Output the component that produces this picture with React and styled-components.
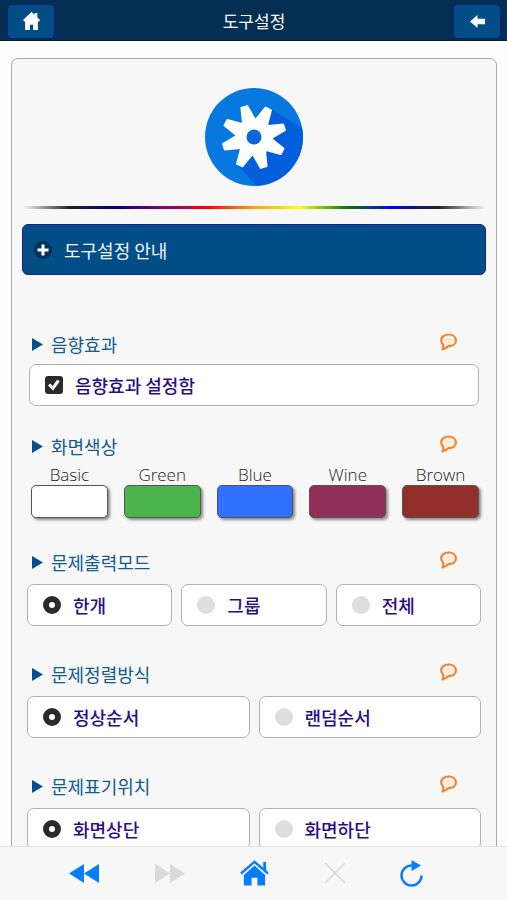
import styled, { createGlobalStyle } from 'styled-components';
import { useState } from 'react';

const GlobalStyle = createGlobalStyle`
* {
box-sizing: border-box;
}
body {
margin: 0;
background-color: #fdfdfd;
font-family: "Noto Sans CJK KR", "Noto Sans", sans-serif;
}
`;
const Page = styled.div`
display: flex;
flex-direction: column;
height: 100vh;
`;
const Header = styled.header`
display: flex;
flex-direction: row;
align-items: center;
justify-content: space-between;
flex: none;
height: 41px;
padding: 2px 6px 0 7px;
background-color: #042f52;
border-bottom: 1px solid #021a30;
`;
const HeaderTitle = styled.h1`
margin: 0;
color: #f4f7fa;
font-size: 17px;
font-weight: 400;
line-height: 24px;
`;
const HeaderButton = styled.button`
display: flex;
align-items: center;
justify-content: center;
width: 48px;
height: 35px;
padding: 0;
background-color: #044e87;
border: 1px solid #0a1c8c;
border-radius: 5px;
cursor: pointer;
`;
const Content = styled.main`
flex: 1;
min-height: 0;
padding: 17px 10px 17px 11px;
overflow-y: auto;
scrollbar-width: none;
`;
const Panel = styled.div`
display: flex;
flex-direction: column;
padding: 29px 10px 30px;
background-color: #f7f7f7;
border: 1px solid #a9a9a9;
border-radius: 7px;
`;
const GearIcon = styled.svg`
align-self: center;
width: 98px;
height: 98px;
`;
const Rainbow = styled.div`
height: 3px;
margin: 20px 1px 15px;
background: linear-gradient(to right, transparent, #222 10%, #00008b 20%, purple 30%, red 40%, orange 50%, yellow 60%, green 70%, blue 80%, #222 90%, transparent);
`;
const Guide = styled.button`
display: flex;
align-items: center;
gap: 12px;
height: 51px;
margin-bottom: 57px;
padding: 0 11px;
color: #eef6fc;
background-color: #044e87;
border: 1px solid #1c1c8c;
border-radius: 6px;
font-family: inherit;
font-size: 18px;
line-height: 24px;
cursor: pointer;
`;
const Section = styled.section`
margin-bottom: ${(props) => props.$space}px;
`;
const SectionHead = styled.div`
display: flex;
align-items: center;
height: 24px;
padding: 0 29px 0 10px;
margin-bottom: ${(props) => props.$space}px;
`;
const SectionTitle = styled.h2`
flex: 1;
margin: 0 0 0 8px;
color: #125a92;
font-size: 18px;
font-weight: 400;
line-height: 24px;
`;
const HelpButton = styled.button`
display: flex;
height: 22px;
padding: 0;
background: none;
border: none;
cursor: pointer;
`;
const OptionRow = styled.div`
display: flex;
gap: 9px;
margin: 0 ${(props) => props.$inset}px;
`;
const Option = styled.label`
display: flex;
flex: 1;
align-items: center;
gap: 12px;
height: 42px;
padding: 0 15px;
color: #2c0c8a;
background-color: white;
border: 1px solid #b0b0b0;
border-radius: 7px;
font-size: 18px;
font-weight: 500;
line-height: 24px;
cursor: pointer;
`;
const Radio = styled.input`
appearance: none;
flex: none;
width: 18px;
height: 18px;
margin: 0;
background-color: #dedede;
border-radius: 50%;
&:checked {
background-color: white;
border: 6px solid #2b2b2b;
}
`;
const Checkbox = styled.input`
appearance: none;
display: grid;
place-items: center;
flex: none;
width: 18px;
height: 18px;
margin: 0;
background-color: #dedede;
border-radius: 3px;
&:checked {
background-color: #2b2b2b;
}
&:checked::before {
content: "";
width: 12px;
height: 12px;
background-color: white;
clip-path: polygon(0 55%, 18% 38%, 38% 58%, 78% 4%, 98% 20%, 42% 96%);
}
`;
const SwatchRow = styled.div`
display: flex;
gap: 16px;
margin: 0 7px 0 9px;
`;
const SwatchLabel = styled.label`
display: flex;
flex: 1;
flex-direction: column;
color: #222;
font-family: "Open Sans", "Noto Sans", sans-serif;
font-size: 17px;
font-weight: 300;
line-height: 20px;
text-align: center;
`;
const Swatch = styled.button`
height: 33px;
padding: 0;
background-color: ${(props) => props.$color};
border: 1px solid #555;
border-radius: 5px;
box-shadow: 2px 2px 3px #888;
cursor: pointer;
`;
const BottomBar = styled.nav`
display: flex;
align-items: center;
justify-content: space-between;
flex: none;
height: 54px;
padding: 0 84px 1px 69px;
background-color: #f7f7f7;
border-top: 1px solid #e2e2e2;
`;
const BarButton = styled.button`
display: flex;
padding: 0;
color: #067dfd;
background: none;
border: none;
cursor: pointer;
&:disabled {
color: #d9d9da;
}
`;

const colors = [
  { name: "Basic", value: "#ffffff" },
  { name: "Green", value: "#4ab34b" },
  { name: "Blue", value: "#2f70fd" },
  { name: "Wine", value: "#922f58" },
  { name: "Brown", value: "#932f2a" },
];

const radioGroups = [
  { name: "output", title: "문제출력모드", options: ["한개", "그룹", "전체"] },
  { name: "order", title: "문제정렬방식", options: ["정상순서", "랜덤순서"] },
  { name: "position", title: "문제표기위치", options: ["화면상단", "화면하단"] },
];

function Gear() {
  return (
    <GearIcon viewBox="0 0 98 98" aria-hidden="true">
      <defs>
        <clipPath id="disc"><circle cx="49" cy="49" r="49" /></clipPath>
      </defs>
      <circle cx="49" cy="49" r="49" fill="#0678de" />
      <path d="M65 20L98 41V98H52L34 79Z" fill="#035edb" clipPath="url(#disc)" />
      <g fill="white" stroke="white" strokeWidth="2" strokeLinejoin="round" transform="rotate(-18 49 49)">
        <circle cx="49" cy="49" r="18" />
        {[0, 45, 90, 135, 180, 225, 270, 315].map((angle) => (
          <path key={angle} d="M42.500 34L46 17.500H52L55.500 34Z" transform={`rotate(${angle} 49 49)`} />
        ))}
      </g>
      <circle cx="49" cy="49" r="7.500" fill="#0569dc" />
    </GearIcon>
  );
}

function SectionHeader({ title, space }) {
  return (
    <SectionHead $space={space}>
      <svg width="11" height="13" viewBox="0 0 11 13" aria-hidden="true">
        <path d="M0 0L11 6.500L0 13Z" fill="#04508a" />
      </svg>
      <SectionTitle>{title}</SectionTitle>
      <HelpButton aria-label={title}>
        <svg width="17" height="18" viewBox="0 0 17 17" fill="#fff3e6" stroke="#f5842b" strokeWidth="2.200" strokeLinejoin="round">
          <path d="M3.200 11.200C1.800 10 1.200 8.600 1.200 7C1.200 3.600 4.400 1 8.700 1S15.900 3.600 15.900 7S12.800 12.700 8.500 12.700C7 14 5 15.400 2.400 15.900C3.300 14.600 3.600 12.800 3.200 11.200Z" />
          <path d="M5.500 6H11.500M5.500 8.500H10.500" stroke="#fbd9ba" strokeWidth="1" />
        </svg>
      </HelpButton>
    </SectionHead>
  );
}

function App() {
  const [sound, updateSound] = useState(true);
  const [selected, updateSelected] = useState({ output: "한개", order: "정상순서", position: "화면상단" });

  return (
    <Page>
      <GlobalStyle />
      <Header>
        <HeaderButton aria-label="홈">
          <svg width="17" height="18" viewBox="0 0 16 17" fill="white">
            <path d="M8 0L11 2.600V1H13.500V5L16 7.500L15 9H14V17H9.500V12H6.500V17H2V9H1L0 7.500Z" />
          </svg>
        </HeaderButton>
        <HeaderTitle>도구설정</HeaderTitle>
        <HeaderButton aria-label="뒤로">
          <svg width="15" height="13" viewBox="0 0 15 13" fill="white">
            <path d="M0 6.500L7.500 0V3.700H15V9.300H7.500V13Z" />
          </svg>
        </HeaderButton>
      </Header>
      <Content>
        <Panel>
          <Gear />
          <Rainbow />
          <Guide>
            <svg width="18" height="18" viewBox="0 0 18 18" aria-hidden="true">
              <circle cx="9" cy="9" r="9" fill="#06315a" />
              <path d="M9 3.500V14.500M3.500 9H14.500" stroke="white" strokeWidth="3" />
            </svg>
            도구설정 안내
          </Guide>
          <Section $space={28}>
            <SectionHeader title="음향효과" space={8} />
            <OptionRow $inset={7}>
              <Option>
                <Checkbox type="checkbox" checked={sound} onChange={(e) => updateSound(e.target.checked)} />
                음향효과 설정함
              </Option>
            </OptionRow>
          </Section>
          <Section $space={32}>
            <SectionHeader title="화면색상" space={7} />
            <SwatchRow>
              {colors.map((color) => (
                <SwatchLabel key={color.name}>
                  {color.name}
                  <Swatch $color={color.value} />
                </SwatchLabel>
              ))}
            </SwatchRow>
          </Section>
          {radioGroups.map((group) => (
            <Section key={group.name} $space={36}>
              <SectionHeader title={group.title} space={10} />
              <OptionRow $inset={5}>
                {group.options.map((option) => (
                  <Option key={option}>
                    <Radio
                      type="radio"
                      name={group.name}
                      checked={selected[group.name] === option}
                      onChange={() => updateSelected({ ...selected, [group.name]: option })}
                    />
                    {option}
                  </Option>
                ))}
              </OptionRow>
            </Section>
          ))}
        </Panel>
      </Content>
      <BottomBar>
        <BarButton aria-label="이전">
          <svg width="30" height="19" viewBox="0 0 30 19" fill="currentColor">
            <path d="M0 9.500L15 0V19ZM15 9.500L30 0V19Z" />
          </svg>
        </BarButton>
        <BarButton aria-label="다음" disabled>
          <svg width="30" height="19" viewBox="0 0 30 19" fill="currentColor">
            <path d="M0 0L15 9.500L0 19ZM15 0L30 9.500L15 19Z" />
          </svg>
        </BarButton>
        <BarButton aria-label="처음">
          <svg width="29" height="26" viewBox="0 0 30 26">
            <path d="M4 15L15 5L26 15V26H18V18H12V26H4Z" fill="currentColor" />
            <path d="M25.500 1.500V10" fill="none" stroke="currentColor" strokeWidth="3" />
            <path d="M2.500 15.500L15 4.700L27.500 15.500" fill="none" stroke="#f7f7f7" strokeWidth="1" />
            <path d="M1 13.500L15 1.500L29 13.500" fill="none" stroke="currentColor" strokeWidth="2.500" />
          </svg>
        </BarButton>
        <BarButton aria-label="닫기" disabled>
          <svg width="20" height="20" viewBox="0 0 20 20" stroke="currentColor" strokeWidth="1.500">
            <path d="M0 0L20 20M20 0L0 20" />
          </svg>
        </BarButton>
        <BarButton aria-label="새로고침">
          <svg width="23" height="27" viewBox="0 0 23 27">
            <path d="M12 5.500A10 10 0 1 0 21.500 15.500" fill="none" stroke="currentColor" strokeWidth="2.500" />
            <path d="M11.500 0L21 5.500L11.500 11Z" fill="currentColor" />
          </svg>
        </BarButton>
      </BottomBar>
    </Page>
  );
}

export default App;
